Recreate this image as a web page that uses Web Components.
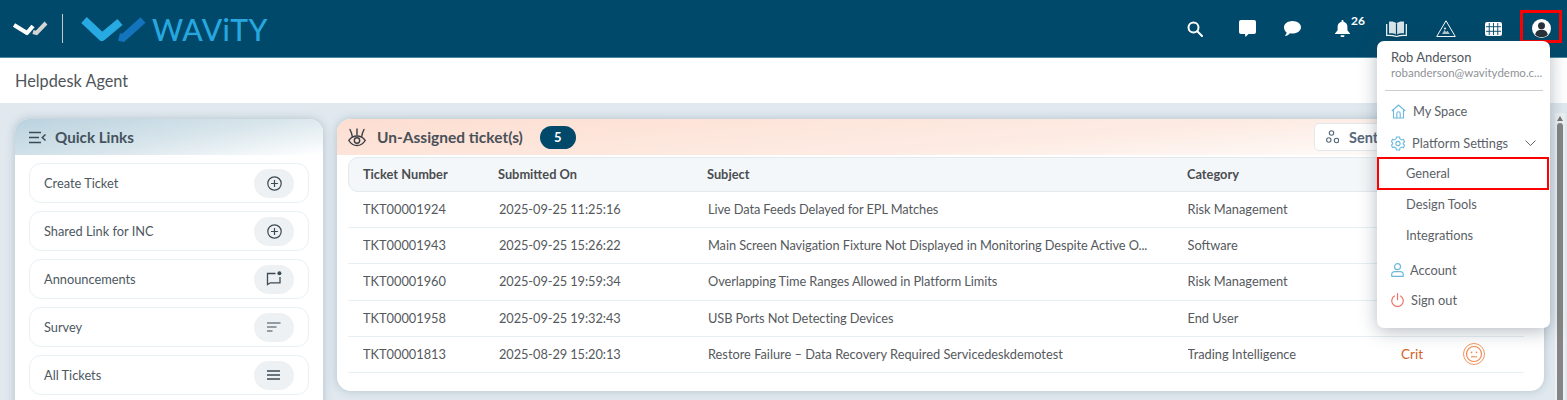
<!DOCTYPE html>
<html>
<head>
<meta charset="utf-8">
<title>Helpdesk Agent</title>
<style>
    html, body { margin: 0; height: 400px; overflow: hidden; background: #e1e9ef; font-family: Lato, "Noto Sans", sans-serif; }
</style>
</head>
<body>
<app-shell></app-shell>
<script>
const ICONS = {
    search: '<svg width="16" height="16" viewBox="0 0 16 16" fill="none" stroke="#fff" stroke-width="2"><circle cx="6.500" cy="6.500" r="5"/><path d="M10.300 10.300l4.700 4.700" stroke-linecap="round"/></svg>',
    chat: '<svg width="17" height="17" viewBox="0 0 17 17" fill="#fff"><path d="M2 0h13a2 2 0 0 1 2 2v10a2 2 0 0 1-2 2H9.500l-3 3-.5-3H2a2 2 0 0 1-2-2V2a2 2 0 0 1 2-2z"/></svg>',
    bubble: '<svg width="17" height="15" viewBox="0 0 17 15" fill="#fff"><path d="M8.500 0c4.700 0 8.500 2.800 8.500 6.300s-3.800 6.300-8.500 6.300c-.9 0-1.700-.1-2.500-.3C4.800 13.800 3 15 .8 15c.9-1 1.600-2.100 1.800-3.400C1 10.400 0 8.500 0 6.300 0 2.800 3.800 0 8.500 0z"/></svg>',
    bell: '<svg width="15" height="17" viewBox="0 0 15 17" fill="#fff"><path d="M7.500 0c.6 0 1 .4 1 1v.7c2.500.5 3.900 2.600 3.900 5v3.500l2.600 3.300v.6H0v-.6l2.600-3.300V6.700c0-2.400 1.400-4.500 3.900-5V1c0-.6.400-1 1-1z"/><path d="M5.500 15.200h4a2 2 0 0 1-4 0z"/></svg>',
    book: '<svg width="21" height="16" viewBox="0 0 21 16" fill="none" stroke="#fff" stroke-width="1.200"><path d="M10.500 2.300C8.500.8 6 .4 3 .7v11.700c3-.2 5.500.2 7.500 1.500 2-1.300 4.500-1.700 7.500-1.500V.7c-3-.3-5.500.1-7.500 1.600z" fill="#fff" fill-opacity=".85" stroke="none"/><path d="M10.500 2.300v11.600" stroke="#00496a"/><path d="M.7 3v11.500c3.500-.3 6.800 0 9.800 1 3-1 6.300-1.300 9.800-1V3"/></svg>',
    hazard: '<svg width="20" height="17" viewBox="0 0 20 17" fill="none" stroke="#fff" stroke-width="1"><path d="M10 .8l9.300 15.700H.7z" stroke-linejoin="round"/><path d="M6 14l2.500-4 1.600 2 1.400-1.300 2.300 3.300z" fill="#fff" fill-opacity=".7" stroke="none"/><circle cx="9" cy="8.600" r="1" fill="#fff" stroke="none"/></svg>',
    grid: '<svg width="17" height="14" viewBox="0 0 17 14"><rect width="17" height="14" rx="2" fill="#fff"/><path d="M1 4.700h15M1 9.300h15M4.250 1v12M8.500 1v12M12.750 1v12" stroke="#00496a" stroke-width=".9"/></svg>',
    user: '<svg width="19" height="19" viewBox="0 0 19 19"><circle cx="9.500" cy="9.500" r="9.500" fill="#fff"/><circle cx="9.500" cy="6.800" r="3.500" fill="#27323a"/><path d="M3.300 16c0-3.500 2.800-5.300 6.200-5.300s6.200 1.800 6.200 5.300a9.500 9.500 0 0 1-12.400 0z" fill="#27323a"/></svg>',
    plus: '<svg width="15" height="15" viewBox="0 0 15 15" fill="none" stroke="#3c4a54" stroke-width="1.200"><circle cx="7.500" cy="7.500" r="6.700"/><path d="M7.500 4v7M4 7.500h7"/></svg>',
    note: '<svg width="16" height="16" viewBox="0 0 16 16" fill="none" stroke="#3c4a54" stroke-width="1.300"><path d="M9.500 2.500H1.500v11l2.800-1.700h9.700V6"/><circle cx="13.400" cy="2.300" r="2" fill="#3c4a54" stroke="none"/></svg>',
    sort: '<svg width="14" height="10" viewBox="0 0 14 10" fill="none" stroke="#3c4a54" stroke-width="1.200"><path d="M0 1h13.500M0 5h9.500M0 9h5.500"/></svg>',
    lines: '<svg width="14" height="10" viewBox="0 0 14 10" fill="none" stroke="#3c4a54" stroke-width="1.300"><path d="M0 1h13M0 5h13M0 9h13"/></svg>',
    menuback: '<svg width="17" height="13" viewBox="0 0 17 13" fill="none" stroke="#3d4b55" stroke-width="1.500"><path d="M0 1.500h12M0 6.500h10M0 11.500h12M16.500 3.500l-3.200 3 3.200 3"/></svg>',
    eye: '<svg width="18" height="19" viewBox="0 0 18 19" fill="none" stroke="#3a3f44" stroke-width="1.400"><path d="M.8 12.500C3 9.200 6 8 9 8s6 1.200 8.200 4.500C15 16 12 17.500 9 17.500S3 16 .8 12.500z"/><circle cx="9" cy="12.500" r="2.700"/><path d="M4.300 8.500C4 5.500 3 3.500 2 1.500M9 7V1M13.700 8.500c.3-3 1.300-5 2.300-7" stroke-linecap="round"/></svg>',
    share: '<svg width="13" height="14" viewBox="0 0 13 14" fill="none" stroke="#56677a" stroke-width="1.100"><circle cx="5.500" cy="3" r="2.200"/><circle cx="2.800" cy="10" r="2.200"/><circle cx="10.500" cy="10.500" r="2.200"/></svg>',
    home: '<svg width="15" height="15" viewBox="0 0 15 15" fill="none" stroke="#6cb8dc" stroke-width="1.100" stroke-linejoin="round"><path d="M.8 7L7.500 1l6.700 6"/><path d="M2.500 5.800V14h10V5.800"/><path d="M5.800 14V9.500a1.700 1.700 0 0 1 3.400 0V14"/></svg>',
    gear: '<svg width="14" height="15" viewBox="0 0 14 15" fill="none" stroke="#6cb8dc" stroke-width="1.100" stroke-linejoin="round"><path d="M5.500 1h3l.5 1.900 1.700 1 1.800-.6 1 2.500-1.300 1.200v1l1.300 1.200-1 2.500-1.800-.6-1.700 1-.5 1.900h-3L5 12l-1.700-1-1.800.6-1-2.500 1.300-1.200v-1L.500 5.800l1-2.500 1.800.6 1.700-1z"/><circle cx="7" cy="7.500" r="2.100"/></svg>',
    person: '<svg width="13" height="14" viewBox="0 0 13 14" fill="none" stroke="#6cb8dc" stroke-width="1.200"><circle cx="6.500" cy="3.700" r="3"/><path d="M.7 13.300v-1.600c0-2 1.800-3 3.300-3h5c1.500 0 3.300 1 3.300 3v1.600z" stroke-linejoin="round"/></svg>',
    power: '<svg width="13" height="14" viewBox="0 0 13 14" fill="none" stroke="#ee7366" stroke-width="1.200"><path d="M6.500 .7v6" stroke-linecap="round"/><path d="M3.800 2.800a5.700 5.700 0 1 0 5.400 0"/></svg>',
    chevron: '<svg width="11" height="6" viewBox="0 0 11 6" fill="none" stroke="#5d6871" stroke-width="1"><path d="M.5 .5l5 5 5-5"/></svg>',
    smile: '<svg width="22" height="22" viewBox="0 0 22 22" fill="none" stroke="#f0894f"><circle cx="11" cy="11" r="10.500" stroke-width=".9"/><circle cx="11" cy="11" r="7.500" stroke-width="1.200"/><circle cx="8.500" cy="9.300" r=".9" fill="#f0894f" stroke="none"/><circle cx="13.500" cy="9.300" r=".9" fill="#f0894f" stroke="none"/><path d="M8 13.800h6" stroke-width="1.100"/></svg>'
};

class WavityLogo extends HTMLElement {
    connectedCallback() {
        this.attachShadow({ mode: 'open' }).innerHTML = `
            <style>
                :host { display: flex; align-items: center; }
                .small { margin-left: 12px; }
                .rule { width: 1px; height: 29px; background: #c4c8c8; margin: 0 18px 0 14px; }
                .word { font: 500 30px Lato, sans-serif; color: #27a7df; letter-spacing: .5px; margin-left: 5px; line-height: 30px; }
                svg { display: block; }
            </style>
            <svg class="small" width="36" height="15" viewBox="0 0 36 15">
                <path d="M21 11l3.500 1L34 2" fill="none" stroke="#d4d4d4" stroke-width="4"/>
                <path d="M2 4l13 8 6-7" fill="none" stroke="#fff" stroke-width="4.200" stroke-linejoin="round"/>
            </svg>
            <div class="rule"></div>
            <svg width="66" height="28" viewBox="0 0 66 28">
                <path d="M38 22l4 1L62 5" fill="none" stroke="#1374bd" stroke-width="7.500"/>
                <path d="M3 5l18 17L39 7" fill="none" stroke="#27a9e1" stroke-width="8" stroke-linejoin="round"/>
            </svg>
            <div class="word">WAViTY</div>`;
    }
}
customElements.define('wavity-logo', WavityLogo);

class TopBar extends HTMLElement {
    connectedCallback() {
        this.attachShadow({ mode: 'open' }).innerHTML = `
            <style>
                :host { display: flex; align-items: center; justify-content: space-between; height: 57px; background: #00496a; border-bottom: 1px solid #4d8aa3; }
                .icons { display: flex; align-items: center; height: 100%; padding-right: 5px; }
                .icon { display: flex; align-items: center; justify-content: center; height: 100%; position: relative; }
                sup { position: absolute; left: 16px; top: 13px; font: 700 12px Lato, sans-serif; color: #fff; }
                .active { width: 42px; height: 33px; margin-left: 18px; box-sizing: border-box; border: 3px solid #f00; margin-top: -4px; padding-top: 3px; }
                svg { display: block; }
            </style>
            <wavity-logo></wavity-logo>
            <div class="icons">
                <div class="icon" style="width:16px">${ICONS.search}</div>
                <div class="icon" style="width:17px;margin-left:36px">${ICONS.chat}</div>
                <div class="icon" style="width:17px;margin-left:28px">${ICONS.bubble}</div>
                <div class="icon" style="width:15px;margin-left:34px">${ICONS.bell}<sup>26</sup></div>
                <div class="icon" style="width:21px;margin-left:36px">${ICONS.book}</div>
                <div class="icon" style="width:20px;margin-left:29px">${ICONS.hazard}</div>
                <div class="icon" style="width:17px;margin-left:29px">${ICONS.grid}</div>
                <div class="icon active">${ICONS.user}</div>
            </div>`;
    }
}
customElements.define('top-bar', TopBar);

class QuickLink extends HTMLElement {
    connectedCallback() {
        this.attachShadow({ mode: 'open' }).innerHTML = `
            <style>
                :host { display: flex; align-items: center; justify-content: space-between; height: 40px; box-sizing: border-box; border: 1px solid #e8f0f4; border-radius: 12px; padding: 0 14px 0 14px; font-size: 12.800px; color: #4d5760; }
                .btn { width: 40px; height: 29px; border-radius: 15px; background: #edf1f4; display: flex; align-items: center; justify-content: center; }
                svg { display: block; }
            </style>
            <slot></slot>
            <div class="btn">${ICONS[this.getAttribute('icon')]}</div>`;
    }
}
customElements.define('quick-link', QuickLink);

class QuickLinks extends HTMLElement {
    connectedCallback() {
        this.attachShadow({ mode: 'open' }).innerHTML = `
            <style>
                :host { display: block; width: 308px; flex: none; background: #fff; border-radius: 14px 14px 0 0; box-shadow: 0 0 10px rgba(70,100,120,.3); height: 330px; }
                .head { display: flex; align-items: center; gap: 9px; height: 36px; padding-left: 14px; border-radius: 14px 14px 0 0; background: linear-gradient(170deg, #bad2df 0%, #d9e6ec 55%, #ffffff 100%); font: 700 15.200px Lato, sans-serif; color: #45535e; }
                .list { display: flex; flex-direction: column; gap: 8px; padding: 8px 14px; }
                svg { display: block; }
            </style>
            <div class="head">${ICONS.menuback}<span>Quick Links</span></div>
            <div class="list"><slot></slot></div>`;
    }
}
customElements.define('quick-links', QuickLinks);

class TicketRow extends HTMLElement {
    connectedCallback() {
        const cells = this.getAttribute('cells').split('|');
        this.attachShadow({ mode: 'open' }).innerHTML = `
            <style>
                :host { display: grid; grid-template-columns: 136px 209px 479.500px 213.500px 62px 1fr; align-items: center; height: 36.200px; box-sizing: border-box; border-bottom: 1px solid #e7eff3; padding: 0 0 1px 15px; font-size: 12.800px; color: #55595d; white-space: nowrap; margin-right: 20px; }
                .date, .subject { letter-spacing: -.08px; }
                :host([crit]) .subject { letter-spacing: 0; }
                .crit { color: #d5622a; font-size: 13.500px; }
                svg { display: block; }
                span { overflow: hidden; }
            </style>
            <span>${cells[0]}</span><span class="date">${cells[1]}</span><span class="subject">${cells[2]}</span><span>${cells[3]}</span>
            ${this.hasAttribute('crit') ? `<span class="crit">Crit</span><span>${ICONS.smile}</span>` : ''}`;
    }
}
customElements.define('ticket-row', TicketRow);

class TicketPanel extends HTMLElement {
    connectedCallback() {
        this.attachShadow({ mode: 'open' }).innerHTML = `
            <style>
                :host { display: block; flex: 1; align-self: flex-start; background: #fff; border-radius: 14px; box-shadow: 0 0 10px rgba(70,100,120,.3); height: 272px; }
                .head { display: flex; align-items: center; height: 36px; padding-left: 11px; border-radius: 14px 14px 0 0; background: linear-gradient(175deg, #fdded1 0%, #fdece4 60%, #ffffff 100%); color: #4a5058; position: relative; }
                .title { margin-left: 11px; font: 700 15.500px Lato, sans-serif; }
                .count { margin-left: 17px; width: 36px; height: 23px; border-radius: 12px; background: #00496a; color: #fff; font: 700 13px Lato, sans-serif; display: flex; align-items: center; justify-content: center; }
                .sent { position: absolute; left: 977px; top: 4px; width: 120px; height: 28px; box-sizing: border-box; background: #fff; border: 1px solid #e3e8ec; border-radius: 5px; display: flex; align-items: center; gap: 10px; padding-left: 11px; font: 700 14.500px Lato, sans-serif; color: #56677a; }
                .cols { display: grid; grid-template-columns: 135px 209px 480px 1fr; align-items: center; height: 35px; box-sizing: border-box; margin: 2px 20px 0 11px; padding: 0 0 2px 14px; background: #f4f7f9; border: 1px solid #e3e9ed; border-radius: 10px; font: 700 12.800px Lato, sans-serif; color: #4a4d50; }
                .rows { display: flex; flex-direction: column; margin-left: 11px; }
                svg { display: block; }
            </style>
            <div class="head">${ICONS.eye}<span class="title">Un-Assigned ticket(s)</span><span class="count">5</span>
                <div class="sent">${ICONS.share}<span>Sent</span></div></div>
            <div class="cols"><span>Ticket Number</span><span>Submitted On</span><span>Subject</span><span>Category</span></div>
            <div class="rows"><slot></slot></div>`;
    }
}
customElements.define('ticket-panel', TicketPanel);

class UserMenu extends HTMLElement {
    connectedCallback() {
        this.attachShadow({ mode: 'open' }).innerHTML = `
            <style>
                :host { display: block; position: absolute; left: 1377px; top: 41px; width: 173px; height: 287px; box-sizing: border-box; background: #fff; border-radius: 7px; box-shadow: 0 3px 18px rgba(40,60,80,.35); font-size: 12.800px; color: #5b6167; }
                .who { padding: 8px 0 8px 6px; border-bottom: 1px solid #c9cdd0; margin: 0 7px 0 8px; height: 33px; }
                .name { font-size: 13px; line-height: 16px; color: #50565c; }
                .mail { font-size: 11.500px; line-height: 16px; color: #8f9397; white-space: nowrap; }
                .item { display: flex; align-items: center; gap: 7px; position: absolute; left: 14px; height: 20px; }
                .sub { position: absolute; left: 29px; height: 20px; line-height: 20px; }
                .chev { position: absolute; left: 148px; top: 99px; }
                svg { display: block; }
                .box { position: absolute; left: 0; top: 116px; width: 172px; height: 33px; box-sizing: border-box; border: 2px solid #f00; }
            </style>
            <div class="who"><div class="name">Rob Anderson</div><div class="mail">robanderson@wavitydemo.c...</div></div>
            <div class="item" style="top:60px">${ICONS.home}<span>My Space</span></div>
            <div class="item" style="top:92px">${ICONS.gear}<span>Platform Settings</span></div>
            <div class="chev">${ICONS.chevron}</div>
            <div class="box"></div>
            <div class="sub" style="top:122px">General</div>
            <div class="sub" style="top:153px">Design Tools</div>
            <div class="sub" style="top:184px">Integrations</div>
            <div class="item" style="top:219px;gap:6px">${ICONS.person}<span>Account</span></div>
            <div class="item" style="top:249px">${ICONS.power}<span>Sign out</span></div>`;
    }
}
customElements.define('user-menu', UserMenu);

class PageBar extends HTMLElement {
    connectedCallback() {
        this.attachShadow({ mode: 'open' }).innerHTML = `
            <style>
                :host { display: flex; align-items: center; height: 45px; background: #fff; padding-left: 15px; font-size: 16.300px; color: #50555a; }
            </style>
            <slot></slot>`;
    }
}
customElements.define('page-bar', PageBar);

class AppShell extends HTMLElement {
    connectedCallback() {
        this.attachShadow({ mode: 'open' }).innerHTML = `
            <style>
                :host { display: block; position: relative; height: 400px; overflow: hidden; }
                .body { display: flex; gap: 14px; padding: 16px 23px 0 15px; }
                .scroll { position: absolute; left: 1555px; top: 113px; width: 10px; height: 287px; background: #eef1f3; }
                .up { width: 0; margin: 3px auto 0; border: 3px solid transparent; border-top: 0; border-bottom: 5px solid #777; }
                .thumb { width: 6px; margin: 2px auto 0; height: 280px; background: #858585; border-radius: 3px 3px 0 0; }
            </style>
            <top-bar></top-bar>
            <page-bar>Helpdesk Agent</page-bar>
            <div class="body">
                <quick-links>
                    <quick-link icon="plus">Create Ticket</quick-link>
                    <quick-link icon="plus">Shared Link for INC</quick-link>
                    <quick-link icon="note">Announcements</quick-link>
                    <quick-link icon="sort">Survey</quick-link>
                    <quick-link icon="lines">All Tickets</quick-link>
                </quick-links>
                <ticket-panel>
                    <ticket-row cells="TKT00001924|2025-09-25 11:25:16|Live Data Feeds Delayed for EPL Matches|Risk Management"></ticket-row>
                    <ticket-row cells="TKT00001943|2025-09-25 15:26:22|Main Screen Navigation Fixture Not Displayed in Monitoring Despite Active O...|Software"></ticket-row>
                    <ticket-row cells="TKT00001960|2025-09-25 19:59:34|Overlapping Time Ranges Allowed in Platform Limits|Risk Management"></ticket-row>
                    <ticket-row cells="TKT00001958|2025-09-25 19:32:43|USB Ports Not Detecting Devices|End User"></ticket-row>
                    <ticket-row crit cells="TKT00001813|2025-08-29 15:20:13|Restore Failure – Data Recovery Required Servicedeskdemotest|Trading Intelligence"></ticket-row>
                </ticket-panel>
            </div>
            <div class="scroll"><div class="up"></div><div class="thumb"></div></div>
            <user-menu></user-menu>`;
    }
}
customElements.define('app-shell', AppShell);
</script>
</body>
</html>
